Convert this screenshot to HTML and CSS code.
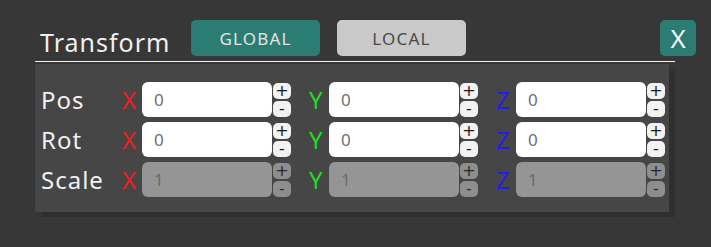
FILE: index.html
```html
<!DOCTYPE html>
<html>
<head>
<meta charset="utf-8">
<link rel="stylesheet" href="styles.css">
</head>
<body>
<div class="window">
  <div class="header">
    <div class="title">Transform</div>
    <button class="tab tab-active">GLOBAL</button>
    <button class="tab tab-idle">LOCAL</button>
    <button class="close">X</button>
  </div>
  <div class="rule"></div>
  <div class="panel">
    <div class="row">
      <div class="label">Pos</div>
      <div class="group"><span class="axis ax-x">X</span><div class="field">0</div><div class="steps"><span class="step">+</span><span class="step">-</span></div></div>
      <div class="group"><span class="axis ax-y">Y</span><div class="field">0</div><div class="steps"><span class="step">+</span><span class="step">-</span></div></div>
      <div class="group"><span class="axis ax-z">Z</span><div class="field">0</div><div class="steps"><span class="step">+</span><span class="step">-</span></div></div>
    </div>
    <div class="row">
      <div class="label">Rot</div>
      <div class="group"><span class="axis ax-x">X</span><div class="field">0</div><div class="steps"><span class="step">+</span><span class="step">-</span></div></div>
      <div class="group"><span class="axis ax-y">Y</span><div class="field">0</div><div class="steps"><span class="step">+</span><span class="step">-</span></div></div>
      <div class="group"><span class="axis ax-z">Z</span><div class="field">0</div><div class="steps"><span class="step">+</span><span class="step">-</span></div></div>
    </div>
    <div class="row row-disabled">
      <div class="label">Scale</div>
      <div class="group"><span class="axis ax-x">X</span><div class="field">1</div><div class="steps"><span class="step">+</span><span class="step">-</span></div></div>
      <div class="group"><span class="axis ax-y">Y</span><div class="field">1</div><div class="steps"><span class="step">+</span><span class="step">-</span></div></div>
      <div class="group"><span class="axis ax-z">Z</span><div class="field">1</div><div class="steps"><span class="step">+</span><span class="step">-</span></div></div>
    </div>
  </div>
</div>
</body>
</html>
```
FILE: styles.css
```css
html, body {
  margin: 0;
  padding: 0;
  background: #373737;
  width: 711px;
  height: 247px;
  overflow: hidden;
  font-family: "Noto Sans", "Open Sans", sans-serif;
}
.window {
  padding: 20px 0 0 35px;
  width: 661px;
}
.header {
  display: flex;
  align-items: flex-start;
  height: 36px;
}
.title {
  flex-shrink: 0;
  width: 151px;
  padding-left: 5px;
  color: #f0f0f0;
  font-size: 25px;
  line-height: 25px;
  letter-spacing: 1px;
  padding-top: 10px;
}
.tab {
  flex-shrink: 0;
  width: 129px;
  height: 36px;
  border: none;
  border-radius: 5px;
  font-family: inherit;
  font-size: 17px;
  letter-spacing: 1.2px;
  padding: 0;
  margin-right: 17px;
}
.tab-active {
  background: #2b7d73;
  color: #e4e4e4;
}
.tab-idle {
  background: #c9c9c9;
  color: #4a4a4a;
}
.close {
  flex-shrink: 0;
  margin-left: auto;
  width: 36px;
  height: 36px;
  border: none;
  border-radius: 5px;
  background: #2b7d73;
  color: #f4f4f4;
  font-family: inherit;
  font-size: 26px;
  padding: 0;
  line-height: 36px;
}
.rule {
  width: 640px;
  height: 1px;
  background: #f2f2f2;
  margin-top: 5px;
}
.panel {
  margin-top: 2px;
  width: 634px;
  box-sizing: border-box;
  padding: 18px 0 15px 6px;
  background: #464646;
  box-shadow: 6px 5px 0 #2f2f2f;
  display: flex;
  flex-direction: column;
  gap: 5px;
}
.row {
  display: flex;
  align-items: center;
  height: 35px;
}
.label {
  flex-shrink: 0;
  width: 81px;
  color: #f0f0f0;
  font-size: 24px;
  letter-spacing: 1px;
  line-height: 35px;
}
.group {
  flex-shrink: 0;
  display: flex;
  align-items: center;
  margin-right: 18px;
}
.group:last-child {
  margin-right: 0;
}
.axis {
  width: 20px;
  font-size: 24px;
  line-height: 35px;
}
.ax-x { color: #ea1f1f; }
.ax-y { color: #1fdc1f; }
.ax-z { color: #1e1ef0; }
.field {
  width: 130px;
  height: 35px;
  box-sizing: border-box;
  background: #ffffff;
  border-radius: 6px;
  padding-left: 12px;
  color: #6f6f6f;
  font-size: 17px;
  line-height: 35px;
}
.steps {
  margin-left: 1px;
  display: flex;
  flex-direction: column;
  gap: 2px;
}
.step {
  width: 18px;
  height: 16px;
  border-radius: 5px;
  background: #f2f2f2;
  color: #1a1a1a;
  font-family: "DejaVu Sans", sans-serif;
  font-size: 16px;
  line-height: 16px;
  display: flex;
  align-items: center;
  justify-content: center;
}
.row-disabled .field {
  background: #959595;
  color: #6a6a6a;
}
.row-disabled .step {
  background: #8e8e8e;
  color: #2a2a2a;
}
```
